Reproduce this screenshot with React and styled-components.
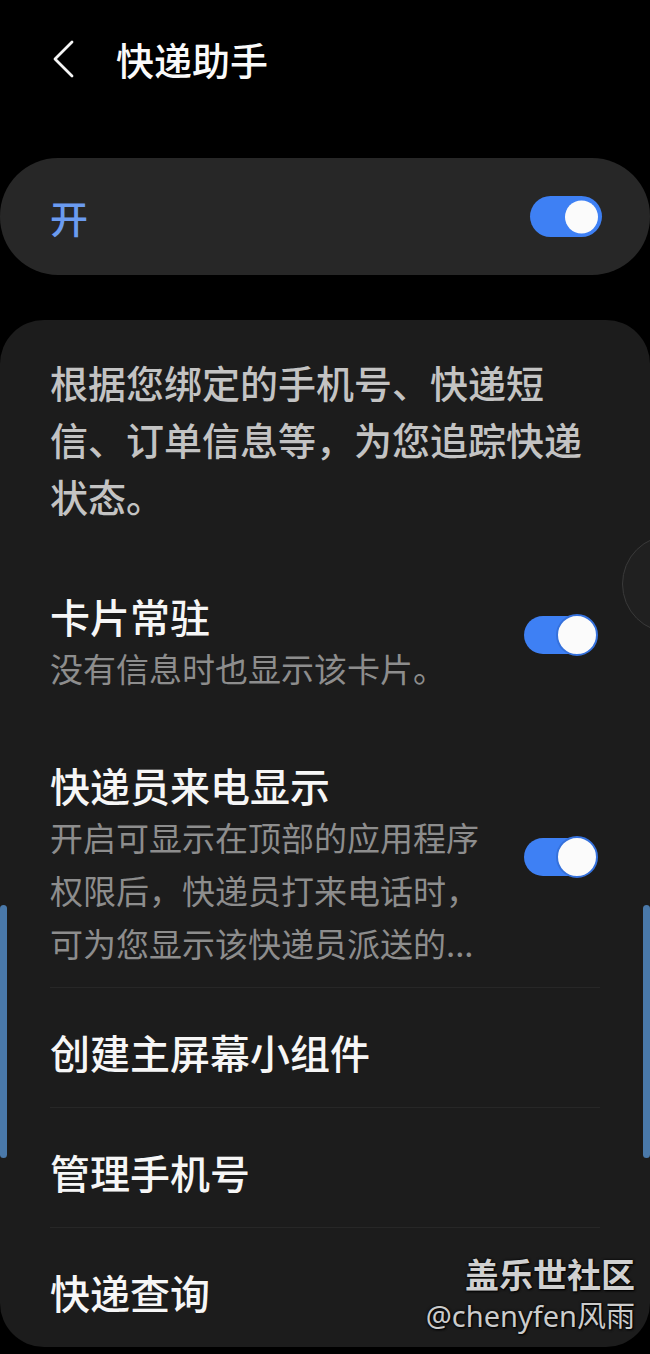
import React from "react";
import styled, { createGlobalStyle } from "styled-components";

const GlobalStyle = createGlobalStyle`
  html, body { margin: 0; padding: 0; background: #000; }
  body { font-family: "Noto Sans CJK SC", "Noto Sans", sans-serif; }
  * { box-sizing: border-box; }
`;

const Page = styled.div`
  position: relative;
  width: 650px;
  height: 1354px;
  overflow: hidden;
  background: #000;
  color: #f4f4f4;
`;

const Header = styled.header`
  height: 117px;
  display: flex;
  align-items: center;
  gap: 38px;
  padding: 0 0 0 48px;
`;

const BackButton = styled.div`
  width: 30px;
  height: 40px;
  display: flex;
  align-items: center;
  justify-content: center;
`;

const Title = styled.h1`
  margin: 0;
  font-size: 38px;
  font-weight: 500;
  line-height: 1;
  color: #fafafa;
`;

const MasterCard = styled.div`
  margin-top: 41px;
  height: 117px;
  border-radius: 58px;
  background: #272727;
  display: flex;
  align-items: center;
  justify-content: space-between;
  padding: 0 48px 0 50px;
`;

const MasterLabel = styled.span`
  font-size: 38px;
  font-weight: 500;
  color: #6b9bf0;
  line-height: 1;
`;

const Track = styled.div`
  position: relative;
  flex: none;
  width: ${(p) => p.$w}px;
  height: ${(p) => p.$h}px;
  border-radius: 999px;
  background: #3e80f4;
  margin-bottom: ${(p) => p.$lift || 0}px;
  margin-right: ${(p) => p.$inset || 0}px;
`;

const Knob = styled.div`
  position: absolute;
  top: 50%;
  right: ${(p) => p.$right}px;
  width: ${(p) => p.$size}px;
  height: ${(p) => p.$size}px;
  transform: translateY(-50%);
  border-radius: 50%;
  background: #fbfbfb;
  border: ${(p) => (p.$ring ? "2px solid #3571dc" : "none")};
`;

const Card = styled.section`
  margin-top: 45px;
  border-radius: 44px;
  background: #1c1c1c;
  padding: 0 50px;
`;

const Intro = styled.div`
  display: flex;
  flex-direction: column;
  gap: 64px;
  padding: 33px 0 17px;
`;

const Description = styled.p`
  margin: 0 0 1.5px;
  font-size: 38px;
  line-height: 57px;
  font-weight: 500;
  color: #c3c3c3;
`;

const SwitchRow = styled.div`
  display: flex;
  align-items: center;
  gap: 24px;
`;

const RowText = styled.div`
  flex: 1;
  min-width: 0;
  display: flex;
  flex-direction: column;
`;

const RowTitle = styled.div`
  font-size: 40px;
  line-height: 52px;
  font-weight: 500;
  color: #f6f6f6;
`;

const RowSub = styled.div`
  font-size: 33px;
  line-height: 53px;
  font-weight: 400;
  color: #8d8d8d;
`;

const ListItem = styled.div`
  border-top: 1px solid #272727;
  height: 120px;
  padding-top: 38px;
  font-size: 40px;
  line-height: 52px;
  font-weight: 500;
  color: #f6f6f6;
`;

const ScrollBar = styled.div`
  position: absolute;
  top: 905px;
  ${(p) => (p.$side === "left" ? "left: 0;" : "right: 0;")}
  width: 7px;
  height: 253px;
  border-radius: 4px;
  background: #4a79aa;
`;

const EdgeHandle = styled.div`
  position: absolute;
  top: 535px;
  left: 622px;
  width: 98px;
  height: 98px;
  border-radius: 50%;
  border: 1.5px solid #3a3a3a;
  background: rgba(40, 40, 40, 0.35);
`;

const Watermark = styled.div`
  position: absolute;
  right: 15px;
  top: 1251px;
  display: flex;
  flex-direction: column;
  align-items: flex-end;
  text-shadow: 1px 1px 2px #000, 0 0 3px #000;
`;

const MarkTitle = styled.div`
  font-size: 34px;
  line-height: 45px;
  font-weight: 700;
  color: #d0d0d0;
`;

const MarkUser = styled.div`
  font-size: 29px;
  line-height: 40px;
  font-weight: 400;
  color: #cbcbcb;
  font-family: "Noto Sans", "Noto Sans CJK SC", sans-serif;
`;

function Toggle({ big }) {
  if (big) {
    return (
      <Track $w={72} $h={41}>
        <Knob $size={33} $right={4} />
      </Track>
    );
  }
  return (
    <Track $w={73} $h={38} $lift={14} $inset={3}>
      <Knob $size={42} $right={-1} $ring />
    </Track>
  );
}

export default function App() {
  return (
    <Page>
      <GlobalStyle />
      <Header>
        <BackButton>
          <svg width="24" height="38" viewBox="0 0 24 38">
            <path
              d="M21 2 L4 19 L21 36"
              fill="none"
              stroke="#f5f5f5"
              strokeWidth="2.8"
              strokeLinecap="round"
              strokeLinejoin="round"
            />
          </svg>
        </BackButton>
        <Title>快递助手</Title>
      </Header>

      <MasterCard>
        <MasterLabel>开</MasterLabel>
        <Toggle big />
      </MasterCard>

      <Card>
        <Intro>
          <Description>
            根据您绑定的手机号、快递短信、订单信息等，为您追踪快递状态。
          </Description>
          <SwitchRow>
            <RowText>
              <RowTitle>卡片常驻</RowTitle>
              <RowSub>没有信息时也显示该卡片。</RowSub>
            </RowText>
            <Toggle />
          </SwitchRow>
          <SwitchRow>
            <RowText>
              <RowTitle>快递员来电显示</RowTitle>
              <RowSub>
                开启可显示在顶部的应用程序权限后，快递员打来电话时，可为您显示该快递员派送的...
              </RowSub>
            </RowText>
            <Toggle />
          </SwitchRow>
        </Intro>
        <ListItem>创建主屏幕小组件</ListItem>
        <ListItem>管理手机号</ListItem>
        <ListItem>快递查询</ListItem>
      </Card>

      <EdgeHandle />
      <ScrollBar $side="left" />
      <ScrollBar $side="right" />

      <Watermark>
        <MarkTitle>盖乐世社区</MarkTitle>
        <MarkUser>@chenyfen风雨</MarkUser>
      </Watermark>
    </Page>
  );
}
